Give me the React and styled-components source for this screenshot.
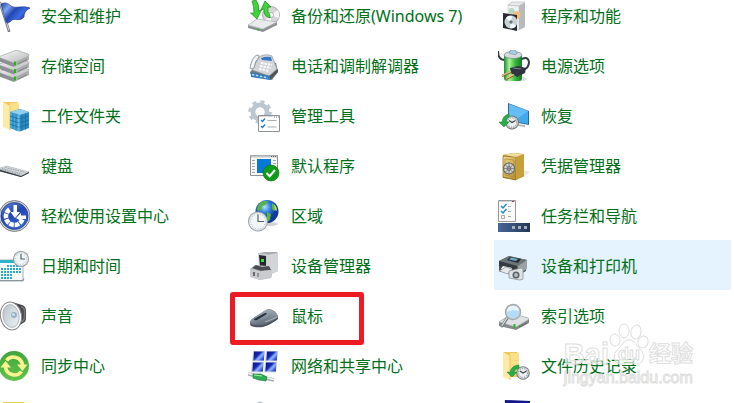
import styled, { createGlobalStyle } from "styled-components";

const GlobalStyle = createGlobalStyle`
  * {
    box-sizing: border-box;
  }
  body {
    margin: 0;
    background: #fff;
    font-family: "Noto Sans", "Noto Sans CJK SC", sans-serif;
  }
`;

const Page = styled.main`
  position: relative;
  height: 100vh;
  overflow: hidden;
`;

// The panel is scrolled a little, so the first row and column start outside the window
const ItemGrid = styled.nav`
  display: grid;
  grid-template-columns: repeat(3, minmax(0, 1fr));
  grid-auto-rows: 50px;
  column-gap: 13px;
  margin: -10px 3px 0 -6px;
`;

const Item = styled.a`
  position: relative;
  display: flex;
  align-items: center;
  gap: 11px;
  padding: 2px 0 0 4px;
  color: #006f18;
  text-decoration: none;
  background: ${({ $active }) => ($active ? "#e5f3ff" : "transparent")};
`;

const Icon = styled.svg`
  flex: none;
  width: 32px;
  height: 32px;
`;

const Label = styled.span`
  font-size: 16px;
  line-height: 24px;
  padding-bottom: 1px;
  white-space: nowrap;
`;

const Marker = styled.span`
  position: absolute;
  top: 2px;
  left: -14px;
  width: 134px;
  height: 53px;
  border: 5px solid #ed1c24;
  border-radius: 3px;
  pointer-events: none;
`;

const Watermark = styled.div`
  position: absolute;
  right: 41px;
  bottom: 15px;
  pointer-events: none;
  color: rgba(255, 255, 255, 0.6);
  -webkit-text-stroke: 1px #dedede;
  font-family: "Liberation Sans", "Noto Sans CJK SC", sans-serif;
`;

const WatermarkTop = styled.div`
  display: flex;
  align-items: flex-end;
  height: 46px;
`;

const WatermarkWord = styled.span`
  font-size: ${({ $size }) => $size}px;
  line-height: 28px;
  font-weight: bold;
`;

const Paw = styled.svg`
  width: 40px;
  height: 46px;
`;

const WatermarkUrl = styled.div`
  font-size: 16px;
  line-height: 20px;
`;

const Clock = ({ x, y, r }) => (
  <g>
    <circle cx={x} cy={y} r={r} fill="#8d979c" />
    <circle cx={x} cy={y} r={r - 0.8} fill="#d5dde1" />
    <circle cx={x} cy={y} r={r - 1.8} fill="#f1f5f6" />
    <circle cx={x} cy={y} r={r - 2.6} fill="none" stroke="#9ba7ad" strokeWidth="0.9" strokeDasharray="0.8 2" />
    <path d={`M${x} ${y - r + 3}V${y}H${x + r - 4}`} fill="none" stroke="#536570" strokeWidth="1.2" />
  </g>
);

// Dark face with the hands at ten past ten, used where the icon is about going back in time
const HistoryClock = ({ x, y, r }) => (
  <g>
    <circle cx={x} cy={y} r={r} fill="#72797d" />
    <circle cx={x} cy={y} r={r - 0.9} fill="#c3c8ca" />
    <circle cx={x} cy={y} r={r - 2} fill="#eceeef" />
    <circle cx={x} cy={y} r={r - 2.4} fill="none" stroke="#777f83" strokeWidth="1" strokeDasharray="0.9 1.5" />
    <path d={`M${x - 3} ${y - 2}L${x} ${y}l3.5 -2`} fill="none" stroke="#3d474c" strokeWidth="1.2" />
  </g>
);

const Folder = () => (
  <g>
    <path d="M5 2h14l2 2v23H5z" fill="#f0c75e" />
    <path d="M12 3h9v21l-9 1z" fill="#fbe08c" />
    <path d="M5 2l7 4v24l-7-3z" fill="#ffeaa6" />
    <path d="M12 6v24" stroke="#dfb044" strokeWidth="0.6" />
  </g>
);

const icons = {
  flag: (
    <>
      <defs>
        <linearGradient id="flag" x2="1" y2="0.6">
          <stop offset="0" stopColor="#21409a" />
          <stop offset="0.28" stopColor="#7ba3ed" />
          <stop offset="0.5" stopColor="#2346b4" />
          <stop offset="0.75" stopColor="#3c6be0" />
          <stop offset="1" stopColor="#1a2d8e" />
        </linearGradient>
      </defs>
      <path d="M2 3l9 28" stroke="#7b7f84" strokeWidth="2.6" strokeLinecap="round" />
      <path d="M2.2 3l8.6 27" stroke="#d3d6da" strokeWidth="1" strokeLinecap="round" />
      <path d="M3 4C7 2 10 3 13 6c5 3 11-1 19 2-4 2-6 5-6 9-4 5-8 1-12 3-3 3-5 4-6 2z" fill="url(#flag)" stroke="#1c358c" strokeWidth="0.6" />
    </>
  ),
  storage: (
    <>
      <defs>
        <linearGradient id="driveTop" x2="1" y2="1">
          <stop offset="0" stopColor="#fbfbfb" />
          <stop offset="1" stopColor="#b4b7b8" />
        </linearGradient>
      </defs>
      {[15, 7.5, 0].map((y) => (
        <g key={y} transform={`translate(0 ${y})`}>
          <path d="M0 7l16 6v4L0 11z" fill="#8c9092" />
          <path d="M16 13l15-7v4l-15 7z" fill="#abafb1" />
          <path d="M0 7L16 1q2-1 4-.5L30 4q2 1 0 2.5L18 12.4q-2 1-4 0z" fill="url(#driveTop)" stroke="#85898b" strokeWidth="0.5" />
          <path d="M17 11.5v4" stroke="#25b80c" strokeWidth="2" />
          <path d="M20 14l9-4.4" stroke="#6f7375" strokeWidth="0.8" />
        </g>
      ))}
    </>
  ),
  workFolder: (
    <>
      <Folder />
      <path d="M12 12l10-3 9 3v16l-9 3.5-10-3.5z" fill="#2b8cc4" />
      <path d="M12 12l10-3 9 3-9 3z" fill="#8fd0ee" />
      <path d="M12 12l9 3v16.5l-9-3.5z" fill="#49addb" />
      <path d="M12 16l9 3 10-3M12 20l9 3 10-3M12 24l9 3.5 10-3.5M15 13v16M18 14v16.5M24 14.5v16M27.5 13.5v16" fill="none" stroke="#176b9e" strokeWidth="0.8" />
      <path d="M21 15v16" stroke="#9bd8f3" strokeWidth="0.7" />
    </>
  ),
  keyboard: (
    <>
      <path d="M0 21l23 6 8-4v-1.5L23 26 0 19z" fill="#4d545a" />
      <path d="M0 18.5l9-2.5L31 22l-8 4z" fill="#d3d7d9" stroke="#a1a6aa" strokeWidth="0.5" />
      <path d="M4 18.5l20 5.5M7.5 17.5l20 5M2 19.5l20 5.3" stroke="#939a9f" strokeWidth="0.9" strokeDasharray="1.5 1" />
      <path d="M0 20l23 6.5 8-4" fill="none" stroke="#343b41" strokeWidth="0.9" />
    </>
  ),
  easeOfAccess: (
    <>
      <defs>
        <linearGradient id="ease" x2="0.5" y2="1">
          <stop offset="0" stopColor="#6283dc" />
          <stop offset="0.5" stopColor="#2447b5" />
          <stop offset="1" stopColor="#2f63cf" />
        </linearGradient>
      </defs>
      <circle cx="16.5" cy="16" r="15.5" fill="#d9dbdf" stroke="#797e87" strokeWidth="1" />
      <circle cx="16.5" cy="16" r="13.6" fill="url(#ease)" stroke="#22336e" strokeWidth="0.7" />
      <path d="M11.5 9.5A8.5 8.5 0 1 0 24.5 19" fill="none" stroke="#fff" strokeWidth="4.6" strokeDasharray="4.5 0.9" />
      <path d="M15.5 5h3.5v7h3l-5 6-4.5-6h3z" fill="#fff" />
      <path d="M18 18l5-5v2.5h5v3.5h-5V21z" fill="#fff" />
    </>
  ),
  calendar: (
    <>
      <path d="M0 10h25v21H0z" fill="#f7fbfc" stroke="#9da8ac" strokeWidth="0.9" />
      <path d="M0 10h25v3H0z" fill="#30b1cb" />
      {[15, 18, 21, 24].map((y) => (
        <path key={y} d={`M${y === 15 ? 9 : 3} ${y + 1}h${y === 24 ? 11 : y === 15 ? 14 : 20}`} stroke="#28a8ce" strokeWidth="2" strokeDasharray="2 1" />
      ))}
      <path d="M3 28h11" stroke="#28a8ce" strokeWidth="2" strokeDasharray="2 1" />
      <path d="M0 30.5h25l1-2" fill="none" stroke="#8b979c" strokeWidth="1.2" />
      <Clock x={23} y={9} r={8} />
    </>
  ),
  speaker: (
    <>
      <defs>
        <linearGradient id="cone" x2="1" y2="1">
          <stop offset="0" stopColor="#b4bec5" />
          <stop offset="0.5" stopColor="#d3dde2" />
          <stop offset="1" stopColor="#eef3f5" />
        </linearGradient>
      </defs>
      <path d="M14 2l10 3q4 1 4 6v7q0 4-3 5l-9 6z" fill="#48484a" />
      <path d="M23 7q3 0 3.5 4v6q0 3-3 5" fill="none" stroke="#77777a" strokeWidth="1.5" />
      <ellipse cx="13" cy="16" rx="10.5" ry="14" fill="#fbfbfb" stroke="#858585" strokeWidth="1" transform="rotate(-10 13 16)" />
      <ellipse cx="13" cy="16" rx="8" ry="11.5" fill="url(#cone)" stroke="#a5adb2" strokeWidth="0.8" transform="rotate(-10 13 16)" />
      <circle cx="16" cy="15" r="3" fill="#94b2c4" />
      <circle cx="15.5" cy="14.5" r="1.5" fill="#c8e2ef" />
    </>
  ),
  sync: (
    <>
      <defs>
        <linearGradient id="sync" x2="0" y2="1">
          <stop offset="0" stopColor="#3fa53d" />
          <stop offset="1" stopColor="#62c44d" />
        </linearGradient>
      </defs>
      <circle cx="16" cy="16" r="15" fill="url(#sync)" />
      <path d="M8.5 10.5A9 9 0 0 1 24.5 15M23.5 21.5A9 9 0 0 1 7.5 17" fill="none" stroke="#fbf38d" strokeWidth="3.6" />
      <path d="M2.5 17.5h10.5L7.5 11zM19 14.5h10.5L24.5 21z" fill="#fbf38d" />
    </>
  ),
  folderTop: <path d="M5 2h21v28H5z" fill="#eccb55" />,
  backup: (
    <>
      <circle cx="23" cy="15" r="8.5" fill="#d6d6d8" stroke="#8e8e90" strokeWidth="0.7" />
      <path d="M23 15l7-5q2 4 1 8zM23 15l-6 5q3 3 6 3z" fill="#f7f3f6" />
      <circle cx="23" cy="15" r="2.5" fill="#fff" stroke="#999" strokeWidth="0.7" />
      <path d="M0 25l14 4 15-7v3l-14 7L0 28z" fill="#8c9092" />
      <path d="M0 25l9-6 20 3-14 7z" fill="#e9eaeb" stroke="#a6a9ab" strokeWidth="0.6" />
      <path d="M10 28.5v2" stroke="#28c017" strokeWidth="1.5" />
      <path d="M4 1l4-1q4 6 2.5 11l3-1-4.500 9-6.500-6h3.500Q6 6 4 1z" fill="#3ed53a" stroke="#168c19" strokeWidth="0.7" />
      <path d="M22 18q-7-2-6-9l-3 1 4-9 6 6h-3q-1 6 2 8z" fill="#3ed53a" stroke="#168c19" strokeWidth="0.7" />
    </>
  ),
  phone: (
    <>
      <path d="M2 22l10-11 16 2 2 9-6 8-21-4z" fill="#747a80" />
      <path d="M4 20l7-13q6-4 13-1l5 13-8 7z" fill="#d3d5d9" stroke="#81878c" strokeWidth="0.6" />
      <path d="M13 8q5-2 10-1l1 4-10-1z" fill="#3479c5" />
      <path d="M13 13l11 2M12 16l11 2M11 19l10 2" stroke="#fbfbfb" strokeWidth="1.8" strokeDasharray="2.5 1" />
      <path d="M2 18Q4 7 9 5q3 0 2 2-4 4-5 11-2 2-4 0z" fill="#f2f3f5" stroke="#7f878d" strokeWidth="0.8" />
      <path d="M3 22l19 4v4L3 27z" fill="#3479b4" />
      <path d="M4 24.5l16 3.5" stroke="#b3e0f5" strokeWidth="1.5" strokeDasharray="2.5 1.5" />
      <path d="M22 26l8-7v3l-8 8z" fill="#505459" />
    </>
  ),
  adminTools: (
    <>
      <circle cx="12" cy="12" r="7" fill="none" stroke="#bcc6ce" strokeWidth="5" />
      <circle cx="12" cy="12" r="10.3" fill="none" stroke="#bcc6ce" strokeWidth="3" strokeDasharray="4.1 4" />
      <circle cx="12" cy="12" r="4.5" fill="#fff" />
      <path d="M10.5 15.5h21v16h-21z" fill="#fff" stroke="#8d9296" />
      <path d="M11 16.5h14" stroke="#d6d9db" />
      <path d="M26 17h1m1 0h1m1 0h1" stroke="#56626b" />
      <path d="M13 20l1.5 1.5L17 18.5M13 26l1.5 1.5 2.5-3" fill="none" stroke="#1d79d8" strokeWidth="1.4" />
      <path d="M19.5 20.5h9M19.5 27h9" stroke="#aaa" />
    </>
  ),
  defaultPrograms: (
    <>
      <path d="M2.5 5.5h27v20h-27z" fill="#f7f7f7" stroke="#8e9194" />
      <path d="M3 6.5h26" stroke="#c5c8ca" strokeWidth="2" />
      <path d="M23 6.5h5" stroke="#626a70" strokeDasharray="1 1" />
      <path d="M4 10.5h3M4 13.5h3M4 16.5h3M4 19.5h3M4 22.5h3M25 10.5h3M25 13.5h3" stroke="#a2a6a9" />
      <path d="M9 9h14v14H9z" fill="#0878d7" />
      <circle cx="23" cy="23" r="8" fill="#109b18" stroke="#087010" strokeWidth="0.6" />
      <path d="M18.5 23l3.2 3.2L27 20" fill="none" stroke="#fff" strokeWidth="2" />
    </>
  ),
  region: (
    <>
      <defs>
        <radialGradient id="globe" cx="0.4" cy="0.3">
          <stop offset="0" stopColor="#b5e2ff" />
          <stop offset="0.5" stopColor="#3180de" />
          <stop offset="1" stopColor="#123a9c" />
        </radialGradient>
      </defs>
      <ellipse cx="20" cy="24" rx="10" ry="2" fill="#d0d2d4" />
      <circle cx="19" cy="11.5" r="11.5" fill="url(#globe)" />
      <path d="M11 4q4-4 9-3l-3 4-3 1-1 4-3 1-1-2zM24 3q4 2 5 6l-3 2-2-2v-4zM19 12l4 2-1 6-3 2z" fill="#58b540" />
      <path d="M26 4q3 3 3 7l-2-1z" fill="#c9df55" />
      <Clock x={10} y={21.5} r={10} />
    </>
  ),
  deviceManager: (
    <>
      <path d="M11 3l5-1h13l1 2v17l-9 4-9-4z" fill="#a9abb1" />
      <path d="M18 5l12-2v18l-10 4z" fill="#d3d4d8" />
      <path d="M10 3l9 1v15l-8-2z" fill="#c9cace" />
      <path d="M11 5l7 1v12l-6-2z" fill="#26282d" />
      <path d="M13 9h3v3h-3z" fill="#31df40" />
      <path d="M2 19l5-4 13 1 4 5-1 7-11 2-9-3z" fill="#b6b8bc" />
      <path d="M4 18l4-3 6 2 7-1 2 4-10 1z" fill="#4b4d54" />
      <path d="M2 19l10 2v9L2 27zM12 21l12-1v7l-12 3z" fill="#c9cbce" />
      <path d="M6 22v4" stroke="#5c5f65" strokeWidth="1.8" />
      <path d="M10 23v4" stroke="#5c5f65" strokeWidth="1" />
    </>
  ),
  mouse: (
    <>
      <defs>
        <linearGradient id="mouse" x2="0.4" y2="1">
          <stop offset="0" stopColor="#aab5bf" />
          <stop offset="0.6" stopColor="#8794a0" />
          <stop offset="1" stopColor="#5c6875" />
        </linearGradient>
      </defs>
      <path d="M2 23q0-3 5-6l11-7q4-2 8 1 4 3 4 8-6 5-15 8-7 1-12-1-1-1-1-3z" fill="#4c545d" />
      <path d="M2 22q0-2 5-5l11-7q4-2 8 1 4 3 4 6-6 5-15 8-7 1-12-1z" fill="url(#mouse)" />
      <path d="M6 19l11-6q2 0 2 1L9 20q-3 1-3-1z" fill="#28323b" />
      <path d="M9 22q7 0 15-8" fill="none" stroke="#6b7784" strokeWidth="0.7" />
      <path d="M17 22q6-2 12-5" fill="none" stroke="#c3cbd3" strokeWidth="0.7" />
    </>
  ),
  network: (
    <>
      <defs>
        <linearGradient id="screen" x2="1" y2="0.8">
          <stop offset="0" stopColor="#09148b" />
          <stop offset="0.45" stopColor="#1528b5" />
          <stop offset="0.65" stopColor="#94b7ff" />
          <stop offset="1" stopColor="#1730bd" />
        </linearGradient>
      </defs>
      {[
        [5, 1],
        [18, 1],
        [4, 12],
        [17, 12],
      ].map(([x, y]) => (
        <g key={`${x}-${y}`}>
          <path d={`M${x} ${y}h12l-1 10.5h-12z`} fill="#d4d9e2" />
          <path d={`M${x + 1} ${y + 0.5}h10.5l-0.7 9h-10.5z`} fill="url(#screen)" />
        </g>
      ))}
      <path d="M0 24l26 6" stroke="#a4adb0" strokeWidth="3.4" />
      <path d="M0 23.5l26 6" stroke="#f1f4f4" strokeWidth="1.6" />
      <path d="M5 24l8 0 6 3-1 4-7-1-6-2z" fill="#2dad54" stroke="#146d32" strokeWidth="0.6" />
      <path d="M6 25l8 1" stroke="#9ff2a4" strokeWidth="1.2" />
    </>
  ),
  gearTop: <circle cx="12" cy="5" r="3.5" fill="#c2c6ca" />,
  programs: (
    <>
      <path d="M10 5l4-3 13 1v24l-6 3-11-2z" fill="#d5d6d8" />
      <path d="M10 5l11 1v24l-11-2z" fill="#f1f2f3" stroke="#bfc1c3" strokeWidth="0.5" />
      <path d="M21 6l6-3v24l-6 3z" fill="#b8babd" />
      <path d="M10 5l4-3h13l-6 4z" fill="#e9eaeb" stroke="#aaadb0" strokeWidth="0.5" />
      <circle cx="18.5" cy="15" r="4" fill="#f3bd80" />
      <circle cx="13.5" cy="11" r="3" fill="#b5d8c5" />
      <path d="M5 13l14 2v16L5 28z" fill="#272c31" />
      <circle cx="13" cy="22" r="6.5" fill="#cbd2d6" />
      <path d="M13 22l-5-4q2-3 6-2zM13 22l5 4q-2 3-6 2z" fill="#f6fbfd" />
      <circle cx="13" cy="22" r="1.7" fill="#687681" />
    </>
  ),
  power: (
    <>
      <defs>
        <linearGradient id="battery">
          <stop offset="0" stopColor="#178d2c" />
          <stop offset="0.3" stopColor="#adf39b" />
          <stop offset="0.6" stopColor="#39bd3d" />
          <stop offset="1" stopColor="#157824" />
        </linearGradient>
      </defs>
      <ellipse cx="20" cy="29" rx="9" ry="2.5" fill="#dcdedf" />
      <path d="M0 1q0 9 7 9" fill="none" stroke="#363b4a" strokeWidth="2" />
      <rect x="6" y="4" width="18" height="27" rx="3" fill="url(#battery)" />
      <ellipse cx="15" cy="5" rx="9" ry="3.5" fill="#d4dbe0" stroke="#828d95" strokeWidth="0.8" />
      <path d="M11 3q0-3 4-3t4 3-8 0z" fill="#a7d0e5" stroke="#748c99" strokeWidth="0.6" />
      <path d="M24 9q6-3 7 3 0 6-6 8" fill="none" stroke="#363b4a" strokeWidth="2" />
      <path d="M12 18l8-2 8 2-1 5-8 4-6-4z" fill="#2f3440" />
      <path d="M15 18l8 1" stroke="#777e8a" strokeWidth="1.2" />
      <path d="M13 22l-9 4M16 25l-8 4" stroke="#81602a" strokeWidth="2.4" />
      <path d="M13 21.5l-9 4M16 24.5l-8 4" stroke="#ecd28c" strokeWidth="1.2" />
    </>
  ),
  recovery: (
    <>
      <path d="M10 3l21 8v14l-21-4z" fill="#35678c" />
      <path d="M11 4l19 7v13l-19-4z" fill="#42a9eb" />
      <path d="M11 4l19 7-14 10-5-1z" fill="#72c8f8" opacity="0.7" />
      <path d="M18 24l9 1v2l-7-1z" fill="#b0b6ba" />
      <HistoryClock x={14} y={22.5} r={7} />
      <path d="M1 22h3q1-7 7-8v3q-3 1-3 5h3l-5 5z" fill="#28ae47" stroke="#148131" strokeWidth="0.5" />
    </>
  ),
  safe: (
    <>
      <defs>
        <linearGradient id="safe" x2="1" y2="1">
          <stop offset="0" stopColor="#efdb91" />
          <stop offset="1" stopColor="#b68e2d" />
        </linearGradient>
      </defs>
      <path d="M26 20l6 2-9 7z" fill="#e9e9e9" />
      <path d="M5 5l10-2 11 1v22l-8 4-13-2z" fill="#a57d22" />
      <path d="M5 6l13 1v23L5 27z" fill="url(#safe)" stroke="#8b6919" strokeWidth="0.7" />
      <path d="M18 7l8-3v22l-8 4z" fill="#c59f3a" />
      <path d="M5 5l10-2 11 1-8 3z" fill="#f1dda0" />
      <path d="M7 9l9 1v17l-9-2z" fill="none" stroke="#a68127" strokeWidth="0.6" />
      <circle cx="11" cy="18.5" r="5.5" fill="#d4d4cd" stroke="#66675f" strokeWidth="1.1" />
      <circle cx="11" cy="18.5" r="2" fill="#f1f1ec" stroke="#686b69" strokeWidth="1" />
      <path d="M11 12v13M5 18.5h12M7 14.5l8 8M15 14.5l-8 8" stroke="#777a75" strokeWidth="0.9" />
    </>
  ),
  taskbar: (
    <>
      <defs>
        <linearGradient id="bar" x2="1" y2="0">
          <stop offset="0" stopColor="#496697" />
          <stop offset="1" stopColor="#243656" />
        </linearGradient>
      </defs>
      <path d="M0.5 0.5h17v21h-17z" fill="#fafafa" stroke="#98999d" />
      <path d="M1 1.5h16" stroke="#d5d5d6" />
      <path d="M14 1.5h2" stroke="#c33b40" />
      <path d="M3 6l2 2 3.5-4M3 11l2 2 3.5-4" fill="none" stroke="#208bd2" strokeWidth="1.5" />
      <path d="M3.5 15.5h3v3h-3z" fill="none" stroke="#aaa" />
      <path d="M10 6.5h3M10 11.5h3M10 16.5h3" stroke="#aaa" />
      <path d="M0 23h32v9H0z" fill="url(#bar)" />
      <path d="M14 27.5h15" stroke="#a4aebd" strokeWidth="3" strokeDasharray="3 3" />
    </>
  ),
  printer: (
    <>
      <path d="M1 11l10-5 18 4-1 11-9 5-18-5z" fill="#50575b" />
      <path d="M1 11l10-5 18 4-9 7z" fill="#6c7478" />
      <path d="M12 7l11 2-3 4-11-3z" fill="#252d33" />
      <path d="M13 7.5l7 1.5-2 2-7-1.5z" fill="#6fa9c8" />
      <path d="M1 11l18 5v5L1 16z" fill="#343a3f" />
      <path d="M5 16l9 2v3l-11-2z" fill="#f7f9fa" />
      <path d="M1 21l7-4 6 2-4 5z" fill="#e6e8e9" stroke="#777d80" strokeWidth="0.6" />
      <path d="M20 16l9-6v9l-9 5z" fill="#9ba1a4" />
      <path d="M11 21l12-3 2 1v10l-3 1-11-2z" fill="#dfe2e3" stroke="#8c9295" strokeWidth="0.8" />
      <circle cx="18" cy="25" r="3.5" fill="#596167" />
      <circle cx="18" cy="25" r="2" fill="#b4bec4" />
    </>
  ),
  indexing: (
    <>
      <path d="M1 22l17 5 13-8v4l-13 7L1 26z" fill="#85898b" />
      <path d="M1 22l12-8q2-1 4 0l13 4q2 1 0 2l-12 7z" fill="#dfe1e2" stroke="#919597" strokeWidth="0.6" />
      <path d="M16.5 24v4" stroke="#25bc19" strokeWidth="2" />
      <path d="M21 27l8-4" stroke="#5d6264" strokeWidth="1" />
      <path d="M10 17l-6 9" stroke="#767d82" strokeWidth="3" strokeLinecap="round" />
      <path d="M10 16.5l-6 9" stroke="#dde0e1" strokeWidth="1.2" strokeLinecap="round" />
      <circle cx="15" cy="12" r="7.5" fill="#cdddeb" stroke="#a3a9ac" strokeWidth="1.5" />
      <circle cx="15" cy="12" r="6" fill="#b3daf6" />
      <path d="M9 12q0-6 6-6t6 5q-6-2-12 1z" fill="#e6f4fd" />
    </>
  ),
  fileHistory: (
    <>
      <Folder />
      <HistoryClock x={25} y={23} r={6.8} />
      <path d="M9 22h3q2-7 9-7v3q-4 1-5 4h3l-5 5z" fill="#28ae47" stroke="#148131" strokeWidth="0.5" />
    </>
  ),
  monitorTop: (
    <>
      <path d="M6 0l26 1v28H6z" fill="#e1e4e9" />
      <path d="M7 0l25 1v27H7z" fill="#161a87" />
    </>
  ),
};

const items = [
  { icon: "flag", label: "安全和维护" },
  { icon: "backup", label: "备份和还原(Windows 7)" },
  { icon: "programs", label: "程序和功能" },
  { icon: "storage", label: "存储空间" },
  { icon: "phone", label: "电话和调制解调器" },
  { icon: "power", label: "电源选项" },
  { icon: "workFolder", label: "工作文件夹" },
  { icon: "adminTools", label: "管理工具" },
  { icon: "recovery", label: "恢复" },
  { icon: "keyboard", label: "键盘" },
  { icon: "defaultPrograms", label: "默认程序" },
  { icon: "safe", label: "凭据管理器" },
  { icon: "easeOfAccess", label: "轻松使用设置中心" },
  { icon: "region", label: "区域" },
  { icon: "taskbar", label: "任务栏和导航" },
  { icon: "calendar", label: "日期和时间" },
  { icon: "deviceManager", label: "设备管理器" },
  { icon: "printer", label: "设备和打印机", active: true },
  { icon: "speaker", label: "声音" },
  { icon: "mouse", label: "鼠标", marked: true },
  { icon: "indexing", label: "索引选项" },
  { icon: "sync", label: "同步中心" },
  { icon: "network", label: "网络和共享中心" },
  { icon: "fileHistory", label: "文件历史记录" },
];

// Only the tops of these icons reach into the window
const nextRow = ["folderTop", "gearTop", "monitorTop"];

const App = () => {
  return (
    <Page>
      <GlobalStyle />
      <ItemGrid>
        {items.map((item) => (
          <Item key={item.icon} href={`#${item.icon}`} $active={item.active}>
            <Icon viewBox="0 0 32 32" fill="none" aria-hidden="true">
              {icons[item.icon]}
            </Icon>
            <Label>{item.label}</Label>
            {item.marked && <Marker />}
          </Item>
        ))}
        {nextRow.map((name) => (
          <Item as="div" key={name} aria-hidden="true">
            <Icon viewBox="0 0 32 32">{icons[name]}</Icon>
          </Item>
        ))}
      </ItemGrid>
      <Watermark>
        <WatermarkTop>
          <WatermarkWord $size={29}>Bai</WatermarkWord>
          <Paw viewBox="0 0 40 46" fill="#fff" fillOpacity="0.6" stroke="#dedede">
            <ellipse cx="6" cy="18" rx="5" ry="6" transform="rotate(-12 6 18)" />
            <ellipse cx="15" cy="9" rx="5" ry="7" />
            <ellipse cx="27" cy="10" rx="5" ry="7" transform="rotate(10 27 10)" />
            <ellipse cx="34" cy="20" rx="5" ry="6" transform="rotate(15 34 20)" />
            <path d="M20 18c6 0 7 6 11 9 5 4 5 15-3 15-4 0-5-1-8-1s-4 1-8 1c-8 0-9-10-3-15 4-3 5-9 11-9z" />
            <text x="20" y="38" textAnchor="middle" fontSize="18" fontWeight="bold">
              du
            </text>
          </Paw>
          <WatermarkWord $size={22}>经验</WatermarkWord>
        </WatermarkTop>
        <WatermarkUrl>jingyan.baidu.com</WatermarkUrl>
      </Watermark>
    </Page>
  );
};

export default App;
